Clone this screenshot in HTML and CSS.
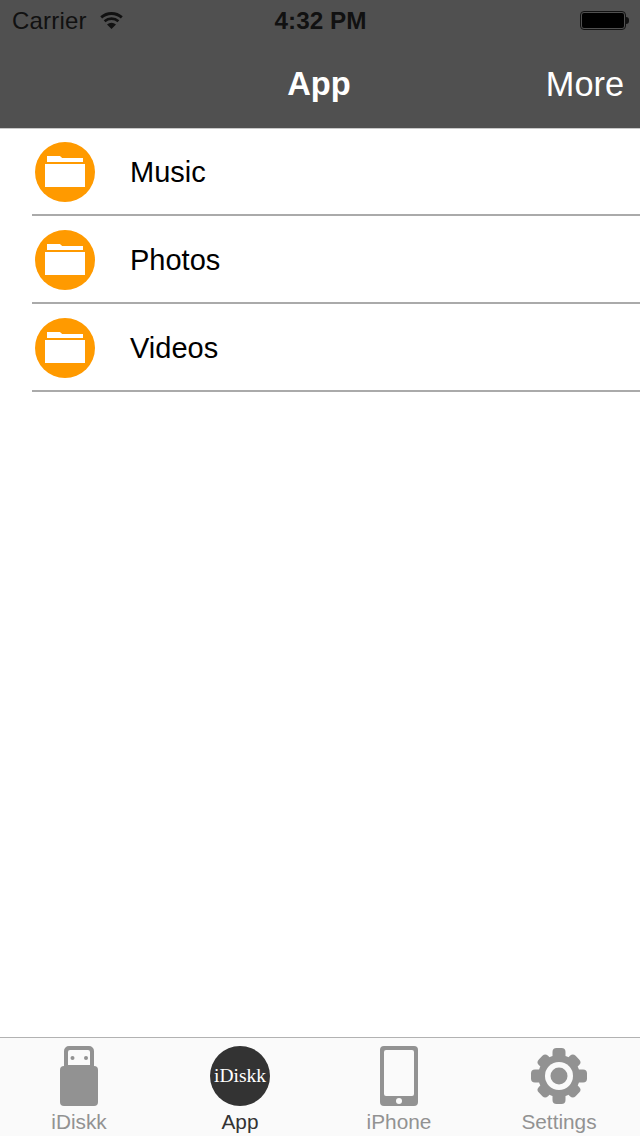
FILE: index.html

```html
<!DOCTYPE html>
<html lang="en">
<head>
    <meta charset="UTF-8">
    <meta name="viewport" content="width=device-width, initial-scale=1.0">
    <title>App</title>
    <link rel="stylesheet" href="styles.css">
</head>
<body>
    <header class="top-bar">
        <div class="status-bar">
            <div class="status-left">
                <span class="carrier">Carrier</span>
                <svg class="wifi" width="24" height="19" viewBox="0 0 24 19">
                    <path d="M11.5 19 L7 14.4 A7 7 0 0 1 16 14.4 Z" fill="#111"/>
                    <path d="M4.6 11.2 A10.5 10.5 0 0 1 18.4 11.2" fill="none" stroke="#111" stroke-width="2.6"/>
                    <path d="M1.2 7.4 A15.5 15.5 0 0 1 21.8 7.4" fill="none" stroke="#111" stroke-width="2.8"/>
                </svg>
            </div>
            <span class="clock">4:32 PM</span>
            <div class="status-right">
                <div class="battery"><div class="battery-fill"></div></div>
                <div class="battery-nub"></div>
            </div>
        </div>
        <div class="nav-bar">
            <h1 class="nav-title">App</h1>
            <span class="nav-more">More</span>
        </div>
    </header>

    <main class="folder-list">
        <div class="folder-row">
            <div class="folder-icon">
                <div class="folder-tab"></div>
                <div class="folder-body"></div>
            </div>
            <span class="folder-name">Music</span>
        </div>
        <div class="folder-row">
            <div class="folder-icon">
                <div class="folder-tab"></div>
                <div class="folder-body"></div>
            </div>
            <span class="folder-name">Photos</span>
        </div>
        <div class="folder-row">
            <div class="folder-icon">
                <div class="folder-tab"></div>
                <div class="folder-body"></div>
            </div>
            <span class="folder-name">Videos</span>
        </div>
    </main>

    <nav class="tab-bar">
        <div class="tab">
            <svg class="tab-icon" width="60" height="60" viewBox="0 0 60 60">
                <path fill-rule="evenodd" fill="#929292" d="M20 0 H40 A5 5 0 0 1 45 5 V21 H15 V5 A5 5 0 0 1 20 0 Z M21 4 A2 2 0 0 0 19 6 V19 H41 V6 A2 2 0 0 0 39 4 Z"/>
                <rect x="11" y="20" width="38" height="40" rx="4" fill="#929292"/>
                <circle cx="23.5" cy="12" r="2" fill="#929292"/>
                <circle cx="37" cy="12" r="2" fill="#929292"/>
            </svg>
            <span class="tab-label">iDiskk</span>
        </div>
        <div class="tab tab-active">
            <div class="brand-badge">iDiskk</div>
            <span class="tab-label">App</span>
        </div>
        <div class="tab">
            <svg class="tab-icon" width="60" height="60" viewBox="0 0 60 60">
                <path fill-rule="evenodd" fill="#929292" d="M15 0 H45 A4 4 0 0 1 49 4 V56 A4 4 0 0 1 45 60 H15 A4 4 0 0 1 11 56 V4 A4 4 0 0 1 15 0 Z M17 4 A2 2 0 0 0 15 6 V48 A2 2 0 0 0 17 50 H43 A2 2 0 0 0 45 48 V6 A2 2 0 0 0 43 4 Z"/>
                <circle cx="30" cy="55" r="3" fill="#fafafa"/>
            </svg>
            <span class="tab-label">iPhone</span>
        </div>
        <div class="tab">
            <svg class="tab-icon" width="60" height="60" viewBox="0 0 60 60">
                <g fill="#929292">
                    <circle cx="30" cy="30" r="21"/>
                    <rect x="23.5" y="2" width="13" height="56" rx="4"/>
                    <rect x="23.5" y="2" width="13" height="56" rx="4" transform="rotate(90 30 30)"/>
                    <rect x="23.5" y="4" width="13" height="52" rx="4" transform="rotate(45 30 30)"/>
                    <rect x="23.5" y="4" width="13" height="52" rx="4" transform="rotate(135 30 30)"/>
                </g>
                <circle cx="30" cy="30" r="14" fill="#fafafa"/>
                <circle cx="30" cy="30" r="8.5" fill="#929292"/>
            </svg>
            <span class="tab-label">Settings</span>
        </div>
    </nav>
</body>
</html>
```

FILE: styles.css

```css
html, body {
    margin: 0;
    height: 1136px;
    overflow: hidden;
}
body {
    display: flex;
    flex-direction: column;
    font-family: "Liberation Sans", Arial, sans-serif;
    background-color: #fff;
}

/* top: status bar + nav bar */
.top-bar {
    height: 128px;
    background-color: #505050;
    box-shadow: 0 1px 0 #c8c8c8;
    flex-shrink: 0;
}
.status-bar {
    height: 38px;
    padding: 2px 11px 0 12px;
    display: grid;
    grid-template-columns: 1fr auto 1fr;
    align-items: center;
    color: #111;
    font-size: 24px;
}
.status-left {
    display: flex;
    align-items: center;
    gap: 13px;
}
.carrier {
    letter-spacing: 0.2px;
}
.wifi {
    margin-top: -3px;
}
.clock {
    font-size: 24.3px;
    font-weight: bold;
}
.status-right {
    display: flex;
    align-items: center;
    justify-content: flex-end;
    margin-top: -1px;
}
.battery {
    width: 42px;
    height: 15px;
    border: 1px solid #111;
    border-radius: 4px;
    padding: 1px;
}
.battery-fill {
    height: 100%;
    background-color: #000;
    border-radius: 2px;
}
.battery-nub {
    width: 3px;
    height: 7px;
    background-color: #111;
    border-radius: 0 3px 3px 0;
}
.nav-bar {
    height: 88px;
    display: grid;
    grid-template-columns: 1fr auto 1fr;
    align-items: center;
    color: #fff;
    padding: 0 16px 0 0;
}
.nav-title {
    grid-column: 2;
    margin: 0 0 0 14px;
    font-size: 32.7px;
    font-weight: bold;
}
.nav-more {
    grid-column: 3;
    justify-self: end;
    font-size: 34.3px;
}

/* folder rows */
.folder-list {
    flex: 1;
}
.folder-row {
    height: 84px;
    padding-top: 2px;
    margin-left: 32px;
    border-bottom: 2px solid #aaa;
    display: flex;
    align-items: center;
}
.folder-icon {
    width: 60px;
    height: 60px;
    margin-left: 3px;
    border-radius: 50%;
    background-color: #ff9a00;
    display: flex;
    flex-direction: column;
    align-items: center;
    padding-top: 14px;
    box-sizing: border-box;
}
.folder-tab {
    width: 36px;
    height: 6px;
    background-color: #fff;
    clip-path: polygon(0 0, 36% 0, 42% 34%, 100% 34%, 100% 100%, 0 100%);
}
.folder-body {
    width: 40px;
    height: 23px;
    margin-top: 2px;
    background-color: #fff;
}
.folder-name {
    margin-left: 35px;
    padding-top: 1px;
    font-size: 29px;
    color: #000;
}

/* bottom tabs */
.tab-bar {
    height: 98px;
    flex-shrink: 0;
    border-top: 1px solid #b2b2b2;
    background-color: #fafafa;
    display: grid;
    grid-template-columns: repeat(4, 1fr);
}
.tab {
    display: flex;
    flex-direction: column;
    align-items: center;
    padding: 8px 2px 0 0;
    color: #929292;
}
.tab-active {
    padding-right: 0;
    color: #333;
}
.tab-icon {
    display: block;
}
.tab-label {
    font-size: 20.8px;
    line-height: 24px;
    margin-top: 4px;
}
.brand-badge {
    width: 60px;
    height: 60px;
    border-radius: 50%;
    background-color: #333;
    color: #fff;
    font-family: "Liberation Serif", serif;
    font-size: 19.5px;
    line-height: 60px;
    text-align: center;
}
```
